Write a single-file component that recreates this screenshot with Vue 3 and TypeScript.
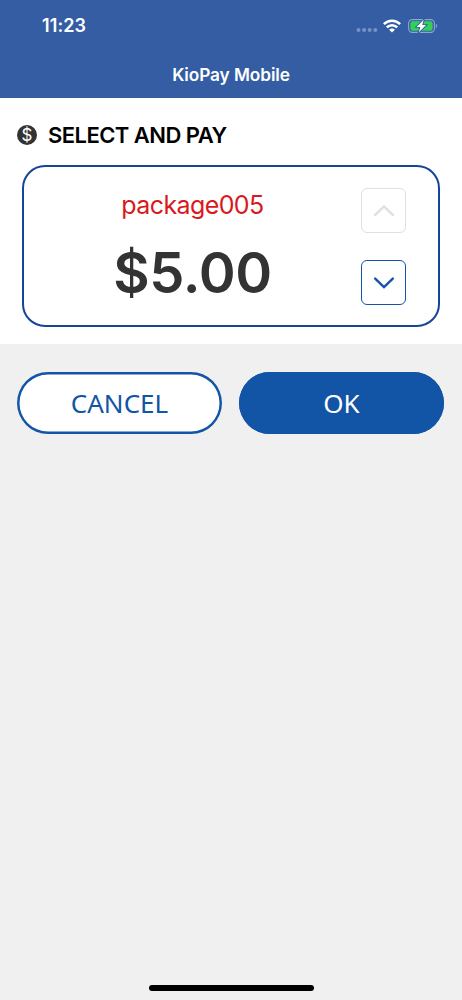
<script setup lang="ts">
import { computed, ref } from 'vue'

interface PaymentPackage {
  name: string
  price: number
}

const packages: PaymentPackage[] = [
  { name: 'package005', price: 5 },
  { name: 'package010', price: 10 },
]

const index = ref(0)
const selected = computed(() => packages[index.value])
const price = computed(() => '$' + selected.value.price.toFixed(2))
const isFirst = computed(() => index.value === 0)
const isLast = computed(() => index.value === packages.length - 1)
</script>

<template>
  <div class="screen">
    <header class="header">
      <div class="status">
        <span class="time">11:23</span>
        <div class="indicators">
          <svg class="signal" width="22" height="6" viewBox="0 0 22 6">
            <circle v-for="n in 4" :key="n" :cx="n * 5.6 - 3.1" cy="3" r="2" fill="#7792c5" />
          </svg>
          <svg class="wifi" width="18" height="14" viewBox="0 0 18 14" fill="none" stroke="#fff" stroke-width="2.5">
            <path d="M0.9 5.2C5.4 0.6 12.6 0.6 17.1 5.2" />
            <path d="M3.8 8.3C6.8 5.4 11.2 5.4 14.2 8.3" />
            <path d="M9 13.6L6.1 10.7C7.7 9.1 10.3 9.1 11.9 10.7Z" fill="#fff" stroke="none" />
          </svg>
          <svg class="battery" width="30" height="16" viewBox="0 0 30 16">
            <rect x="0.6" y="1.6" width="25.8" height="12.8" rx="3.8" fill="none" stroke="#8ea5cf" stroke-width="1.1" />
            <path d="M27.8 5.8C29.6 6.5 29.6 9.5 27.8 10.2Z" fill="#8ea5cf" />
            <rect x="2.4" y="3.3" width="22.2" height="9.4" rx="2.2" fill="#31d158" />
            <path d="M15.7 1.8L8.6 8.9H12.4L10.8 14.2L18.1 7.1H14.2Z" fill="#fff" stroke="#345da4" stroke-width="1.8" paint-order="stroke" />
          </svg>
        </div>
      </div>
      <h1 class="title">KioPay Mobile</h1>
    </header>

    <section class="panel">
      <h2 class="heading">
        <span class="coin">$</span>
        <span class="heading-text">SELECT AND PAY</span>
      </h2>
      <div class="card">
        <div class="details">
          <div class="name">{{ selected.name }}</div>
          <div class="price">{{ price }}</div>
        </div>
        <div class="stepper">
          <button class="step" :disabled="isFirst" aria-label="Previous package" @click="index--">
            <svg width="22" height="14" viewBox="0 0 22 14"><path d="M2.2 10.9L11 2.4L19.8 10.9" /></svg>
          </button>
          <button class="step" :disabled="isLast" aria-label="Next package" @click="index++">
            <svg width="22" height="14" viewBox="0 0 22 14"><path d="M2.2 2.6L11 11.1L19.8 2.6" /></svg>
          </button>
        </div>
      </div>
    </section>

    <div class="actions">
      <button class="action cancel"><span>CANCEL</span></button>
      <button class="action ok"><span>OK</span></button>
    </div>

    <div class="home-bar"></div>
  </div>
</template>

<style>
body {
  margin: 0;
  background: #f0f0f0;
}
</style>

<style scoped>
.screen {
  box-sizing: border-box;
  display: flex;
  flex-direction: column;
  width: 462px;
  height: 1000px;
  background: #f0f0f0;
  font-family: Inter, "Liberation Sans", sans-serif;
  overflow: hidden;
}
.header {
  height: 98px;
  background: #345da4;
  color: #fff;
}
.status {
  display: flex;
  justify-content: space-between;
  height: 51px;
  padding: 0 24px 0 42px;
}
.time {
  padding-top: 15px;
  font-size: 18px;
  line-height: 22px;
  font-weight: 600;
  letter-spacing: 0.1px;
}
.indicators {
  display: flex;
  align-items: center;
}
.signal {
  margin-top: 9px;
  margin-right: 5px;
}
.wifi {
  margin-right: 7px;
}
.title {
  margin: 0;
  padding-top: 12px;
  text-align: center;
  font-size: 17.3px;
  line-height: 23px;
  font-weight: 600;
  letter-spacing: -0.1px;
}
.panel {
  box-sizing: border-box;
  height: 246px;
  padding: 26px 22px 0;
  background: #fff;
}
.heading {
  display: flex;
  align-items: center;
  gap: 11px;
  height: 22px;
  margin: 0 0 19px -5px;
  color: #000;
  font-size: 22px;
  line-height: 22px;
  font-weight: 600;
}
.heading-text {
  white-space: nowrap;
  letter-spacing: -0.55px;
}
.coin {
  width: 20px;
  height: 20px;
  border-radius: 50%;
  background: #333;
  color: #fff;
  text-align: center;
  font-size: 17px;
  line-height: 20px;
  font-weight: 400;
}
.card {
  box-sizing: border-box;
  display: flex;
  width: 418px;
  height: 162px;
  border: 2px solid #164498;
  border-radius: 23px;
}
.details {
  width: 337px;
  text-align: center;
}
.name {
  margin-top: 22px;
  color: #da1820;
  font-size: 25px;
  line-height: 33px;
  letter-spacing: -0.6px;
}
.price {
  margin-top: 16px;
  color: #333;
  font-size: 56px;
  line-height: 70px;
  font-weight: 600;
  letter-spacing: -0.4px;
}
.stepper {
  display: flex;
  flex-direction: column;
  gap: 27px;
  padding-top: 21px;
}
.step {
  display: flex;
  align-items: center;
  justify-content: center;
  box-sizing: border-box;
  width: 45px;
  height: 45px;
  padding: 0;
  border: 1px solid #1254a5;
  border-radius: 6px;
  background: #fff;
  color: #1254a5;
}
.step:disabled {
  border-color: #e0e0e0;
  color: #e0e0e0;
}
.step path {
  fill: none;
  stroke: currentColor;
  stroke-width: 2.4;
  stroke-linecap: round;
}
.actions {
  display: flex;
  gap: 17px;
  padding: 28px 17px 0;
}
.action {
  box-sizing: border-box;
  width: 205px;
  height: 61.5px;
  padding: 2px 0 0;
  border: none;
  border-radius: 31px;
  box-shadow: inset 0 0 0 2.5px #1254a5;
  font-family: "Noto Sans", "Open Sans", sans-serif;
  font-size: 26px;
  line-height: 59px;
}
.cancel {
  background: #fff;
  color: #1254a5;
}
.ok {
  background: #1254a5;
  color: #fff;
}
.home-bar {
  width: 165px;
  height: 6px;
  margin: auto auto 9px;
  border-radius: 3px;
  background: #000;
}
</style>
